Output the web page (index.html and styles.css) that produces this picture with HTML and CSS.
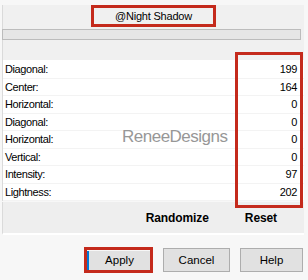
FILE: index.html
```html
<!DOCTYPE html>
<html lang="en">
<head>
    <meta charset="UTF-8">
    <meta name="viewport" content="width=device-width, initial-scale=1.0">
    <title>Night Shadow</title>
    <link rel="stylesheet" href="styles.css">
</head>
<body>

    <div class="dialog">
        <!-- Preset -->
        <div class="top">
            <div class="title">@Night Shadow</div>
            <div class="bar"></div>
        </div>

        <!-- Parametros -->
        <div class="list">
            <div class="row"><span>Diagonal:</span><span>199</span></div>
            <div class="row"><span>Center:</span><span>164</span></div>
            <div class="row"><span>Horizontal:</span><span>0</span></div>
            <div class="row"><span>Diagonal:</span><span>0</span></div>
            <div class="row"><span>Horizontal:</span><span>0</span></div>
            <div class="row"><span>Vertical:</span><span>0</span></div>
            <div class="row"><span>Intensity:</span><span>97</span></div>
            <div class="row"><span>Lightness:</span><span>202</span></div>
            <div class="watermark">ReneeDesigns</div>
        </div>

        <div class="actions">
            <span>Randomize</span>
            <span>Reset</span>
        </div>

        <div class="values-mark"></div>
    </div>

    <div class="buttons">
        <div class="apply-mark"><button class="btn apply">Apply</button></div>
        <button class="btn cancel">Cancel</button>
        <button class="btn help">Help</button>
    </div>

</body>
</html>
```

FILE: styles.css
```css
body {
    font-family: "Liberation Sans", Arial, sans-serif;
    margin: 0;
    padding: 0;
    background-color: #f7f7f7;
    color: #000;
}

.dialog {
    position: relative;
    margin: 0 4px 0 2px;
}

.top {
    margin-top: 5px;
    height: 55px;
    background: #f0f0f0;
    border-left: 1px solid #dadada;
}

.title {
    width: 125px;
    height: 22px;
    margin-left: 88px;
    box-sizing: border-box;
    border: 3px solid #c42a1c;
    font-size: 11px;
    letter-spacing: -0.2px;
    line-height: 16px;
    text-align: center;
}

.bar {
    width: 299px;
    height: 11px;
    margin: 2px 0 0 -1px;
    box-sizing: border-box;
    background: #e6e6e6;
    border: 1px solid #bcbcbc;
}

.list {
    position: relative;
    background: #fff;
    padding-top: 1px;
    border-left: 1px solid #dadada;
}

.row {
    display: flex;
    justify-content: space-between;
    align-items: center;
    height: 17.5px;
    box-sizing: border-box;
    padding: 0 7px 0 2px;
    border-bottom: 1px solid #f3f3f3;
    font-size: 11px;
    letter-spacing: -0.4px;
}

.watermark {
    position: absolute;
    left: 119px;
    top: 67px;
    font-size: 17px;
    letter-spacing: -0.5px;
    color: #979797;
    text-shadow: 0 0 2px #fff, 1px 1px 1px #fff;
}

.actions {
    display: flex;
    justify-content: flex-end;
    align-items: center;
    gap: 36px;
    height: 31px;
    margin-top: 1px;
    padding-right: 27px;
    background: #eeeeee;
    border-left: 1px solid #dadada;
    border-bottom: 2px solid #fff;
    font-size: 12px;
    font-weight: bold;
    letter-spacing: -0.1px;
}

.values-mark {
    position: absolute;
    left: 233px;
    top: 47px;
    width: 68px;
    height: 156px;
    box-sizing: border-box;
    border: 3px solid #c42a1c;
}

.buttons {
    display: flex;
    justify-content: flex-end;
    align-items: center;
    gap: 10px;
    margin-top: 12px;
    padding-right: 5px;
}

.btn {
    height: 24px;
    box-sizing: border-box;
    padding: 0;
    background: #e1e1e1;
    border: 1px solid #adadad;
    font-family: "Liberation Sans", Arial, sans-serif;
    font-size: 11.5px;
    color: #000;
}

.apply-mark {
    border: 3px solid #c42a1c;
    height: 20px;
    overflow: hidden;
}

.btn.apply {
    width: 63px;
    height: 21px;
    border: 2px solid #0078d7;
    border-top: 0;
    border-right: 0;
    line-height: 18px;
}

.btn.cancel {
    width: 67px;
}

.btn.help {
    width: 63px;
}
```
